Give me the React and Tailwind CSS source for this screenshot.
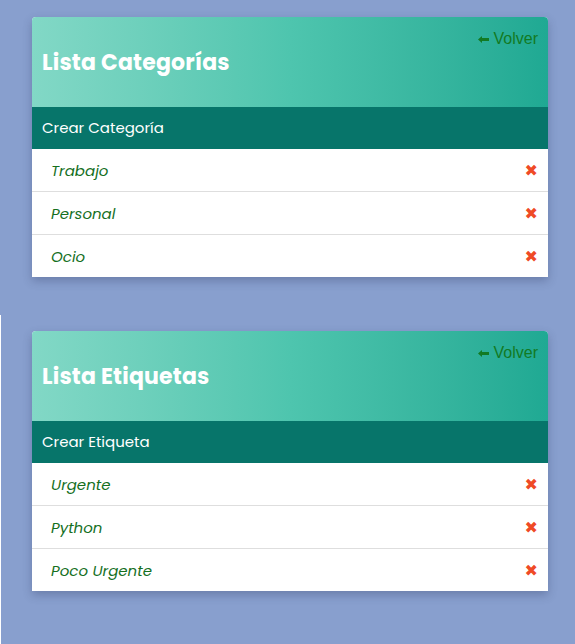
import React from 'react';

const categorias = ['Trabajo', 'Personal', 'Ocio'];
const etiquetas = ['Urgente', 'Python', 'Poco Urgente'];

function ListCard({ title, createLabel, items }) {
  return (
    <div className="w-[516px] bg-white rounded-t shadow-[0_4px_10px_rgba(40,50,90,0.3)]">
      <div className="h-[90px] rounded-t bg-gradient-to-r from-[#82d8c6] via-[#4ec5ae] to-[#1fa993] relative flex items-center px-[10px]">
        <h2 className="text-[22px] font-bold text-white font-['Poppins','Open_Sans',sans-serif] tracking-[0.2px]">{title}</h2>
        <a className="absolute right-[10px] top-[10px] flex items-center gap-[5px] text-[16px] text-[#127a23] font-['Liberation_Sans',Arial,sans-serif] cursor-pointer">
          <svg width="11" height="7" viewBox="0 0 11 7">
            <path d="M0 3.5 L4 0 L4 2 L11 2 L11 5 L4 5 L4 7 Z" fill="#127a23" />
          </svg>
          Volver
        </a>
      </div>
      <div className="h-[42px] bg-[#07756a] flex items-center px-[10px] text-[15px] text-white font-['Poppins','Open_Sans',sans-serif]">
        {createLabel}
      </div>
      <ul className="h-[128px] flex flex-col">
        {items.map((item, i) => (
          <li
            key={item}
            className={`flex-1 flex items-center justify-between pl-[19px] pr-[10px] pt-[2px] ${i > 0 ? 'border-t border-[#dedede]' : ''}`}
          >
            <span className="italic text-[15px] text-[#16701f] font-['Poppins','Open_Sans',sans-serif]">{item}</span>
            <span className="text-[#ef4a26] text-[16px] font-bold leading-none font-['DejaVu_Sans',sans-serif]">✖</span>
          </li>
        ))}
      </ul>
    </div>
  );
}

export default function App() {
  return (
    <div className="min-h-[644px] bg-white flex flex-col">
      <section className="h-[315px] bg-[#889fce] pt-[17px] pl-[32px]">
        <ListCard title="Lista Categorías" createLabel="Crear Categoría" items={categorias} />
      </section>
      <section className="flex-1 ml-px bg-[#889fce] pt-[16px] pl-[31px]">
        <ListCard title="Lista Etiquetas" createLabel="Crear Etiqueta" items={etiquetas} />
      </section>
    </div>
  );
}
